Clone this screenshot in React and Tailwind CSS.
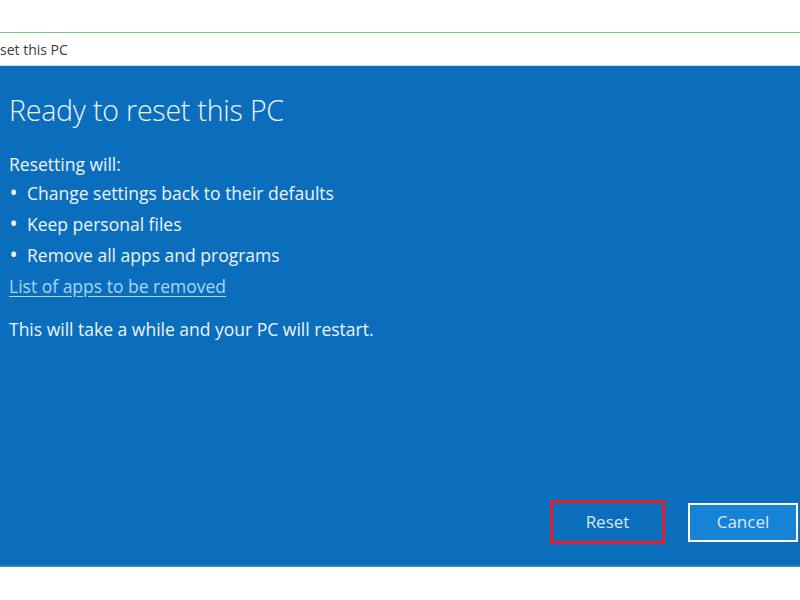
import React from 'react';

const items = [
  'Change settings back to their defaults',
  'Keep personal files',
  'Remove all apps and programs',
];

export default function App() {
  return (
    <div className="w-[800px] h-[600px] bg-white overflow-hidden font-['Open_Sans',sans-serif]">
      {/* page gap above window */}
      <div className="h-[33px] border-b border-[#7cc47f]" />

      {/* title bar */}
      <div className="h-[33px] flex items-center border-b border-[#c9dcee]">
        <span className="text-[14px] text-[#3a3a3a] whitespace-nowrap">set this PC</span>
      </div>

      {/* dialog body */}
      <div className="h-[501px] bg-[#0b6ebd] border-b-2 border-[#2a8f9a] flex flex-col text-[#eef4fa]">
        <div className="px-[9px] pt-[26px] flex-1">
          <h1 className="text-[28.5px] font-light leading-[36px] tracking-[-0.2px]">Ready to reset this PC</h1>

          <p className="mt-[22px] text-[17.5px] leading-[28px]">Resetting will:</p>
          <ul className="text-[17.5px] leading-[31px]">
            {items.map((t) => (
              <li key={t} className="flex items-center">
                <span className="w-[18px] pl-[1px] text-[19px] font-semibold">•</span>
                <span>{t}</span>
              </li>
            ))}
          </ul>
          <a className="block text-[17.5px] leading-[31px] text-[#a9d6f7] underline underline-offset-[3px]">
            List of apps to be removed
          </a>

          <p className="mt-[12px] text-[17.5px] leading-[31px]">This will take a while and your PC will restart.</p>
        </div>

        <div className="flex justify-end items-center gap-[23px] pb-[21px] pr-[2px]">
          <button className="w-[115px] h-[44px] border-[3px] border-[#e4202e] text-[17px] text-[#d8e8f5]">
            Reset
          </button>
          <button className="w-[110px] h-[39px] border-2 border-white bg-[#1783d6] text-[17px] text-[#dcebf7]">
            Cancel
          </button>
        </div>
      </div>
    </div>
  );
}
